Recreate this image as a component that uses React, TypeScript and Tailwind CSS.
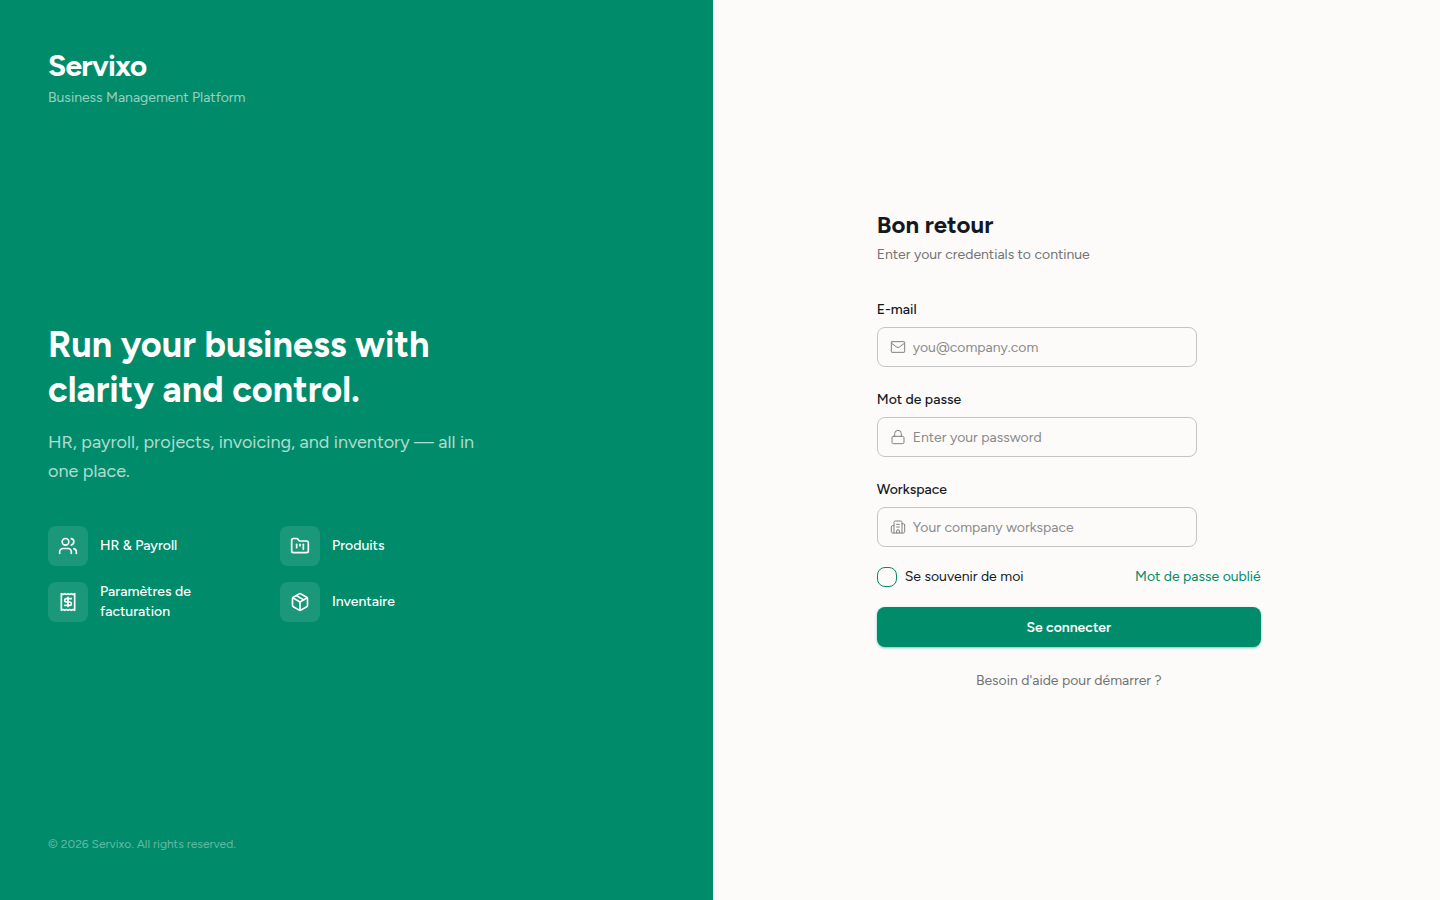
import type { ComponentType, SVGProps } from "react";
import { Building2, FolderKanban, Lock, Package, Receipt, Users } from "lucide-react";
import type { LucideIcon } from "lucide-react";

type Feature = {
  label: string;
  icon: LucideIcon;
};

const features: Feature[] = [
  { label: "HR & Payroll", icon: Users },
  { label: "Produits", icon: FolderKanban },
  { label: "Paramètres de facturation", icon: Receipt },
  { label: "Inventaire", icon: Package },
];

// Envelope with tight corners
function MailIcon(props: SVGProps<SVGSVGElement>) {
  return (
    <svg viewBox="0 0 24 24" fill="none" stroke="currentColor" strokeLinecap="round" strokeLinejoin="round" {...props}>
      <rect x="2" y="4" width="20" height="16" rx="1" />
      <path d="m2.5 6.5 7.6 5.6a3.2 3.2 0 0 0 3.8 0l7.6-5.6" />
    </svg>
  );
}

interface FieldProps {
  id: string;
  label: string;
  type: string;
  placeholder: string;
  icon: ComponentType<SVGProps<SVGSVGElement>>;
}

function Field({ id, label, type, placeholder, icon: Icon }: FieldProps) {
  return (
    <div>
      <label htmlFor={id} className="block text-sm leading-[26px] font-medium text-[#14181f]">
        {label}
      </label>
      <div className="mt-1 flex h-10 max-w-80 items-center gap-[7px] rounded-lg border border-[#c4c4c4] px-3 focus-within:border-[#008c6a]">
        <Icon className="size-4 shrink-0 text-[#808080]" strokeWidth={1.5} />
        <input
          id={id}
          type={type}
          placeholder={placeholder}
          className="h-full min-w-0 flex-1 bg-transparent pt-px text-sm text-[#14181f] outline-none placeholder:text-[#8a8a8a]"
        />
      </div>
    </div>
  );
}

export default function App() {
  return (
    <div className="flex min-h-screen bg-[#fcfbfa] pr-[15px] font-['Figtree','Inter',sans-serif]">
      {/* Brand panel */}
      <div className="flex w-1/2 flex-col justify-between bg-[#008c6a] p-12 text-white">
        <div>
          <p className="text-3xl leading-9 font-bold tracking-tight">Servixo</p>
          <p className="mt-1 text-sm text-white/60">Business Management Platform</p>
        </div>

        <div className="max-w-md">
          <h1 className="text-4xl leading-tight font-bold">Run your business with clarity and control.</h1>
          <p className="mt-4 text-lg leading-[29px] text-white/70">
            HR, payroll, projects, invoicing, and inventory — all in one place.
          </p>
          <ul className="mt-10 grid grid-cols-2 gap-4">
            {features.map(({ label, icon: Icon }) => (
              <li key={label} className="flex items-center gap-3">
                <span className="flex size-10 shrink-0 items-center justify-center rounded-lg bg-white/10">
                  <Icon className="size-5" strokeWidth={2} />
                </span>
                <span className="text-sm font-medium">{label}</span>
              </li>
            ))}
          </ul>
        </div>

        <p className="text-xs text-white/40">© 2026 Servixo. All rights reserved.</p>
      </div>

      {/* Sign-in panel */}
      <div className="flex w-1/2 items-center justify-center">
        <div className="w-full max-w-sm">
          <h2 className="text-2xl leading-8 font-bold text-[#14181f]">Bon retour</h2>
          <p className="mt-1 text-sm text-[#737373]">Enter your credentials to continue</p>

          <form className="mt-8 flex flex-col gap-5" onSubmit={(e) => e.preventDefault()}>
            <Field id="email" label="E-mail" type="email" placeholder="you@company.com" icon={MailIcon} />
            <Field id="password" label="Mot de passe" type="password" placeholder="Enter your password" icon={Lock} />
            <Field id="workspace" label="Workspace" type="text" placeholder="Your company workspace" icon={Building2} />

            <div className="flex items-center justify-between text-sm">
              <label htmlFor="remember" className="flex items-center gap-2 text-[#14181f]">
                <input
                  id="remember"
                  type="checkbox"
                  className="size-5 appearance-none rounded-lg border border-[#008c6a] checked:bg-[#008c6a]"
                />
                Se souvenir de moi
              </label>
              <a href="#" className="text-[#008c6a]">
                Mot de passe oublié
              </a>
            </div>

            <button
              type="submit"
              className="h-10 rounded-lg bg-[#008c6a] pt-0.5 text-sm font-semibold text-white shadow-sm shadow-[#008c6a]/40"
            >
              Se connecter
            </button>
          </form>

          <p className="mt-6 text-center text-sm text-[#737373]">Besoin d'aide pour démarrer ?</p>
        </div>
      </div>
    </div>
  );
}
